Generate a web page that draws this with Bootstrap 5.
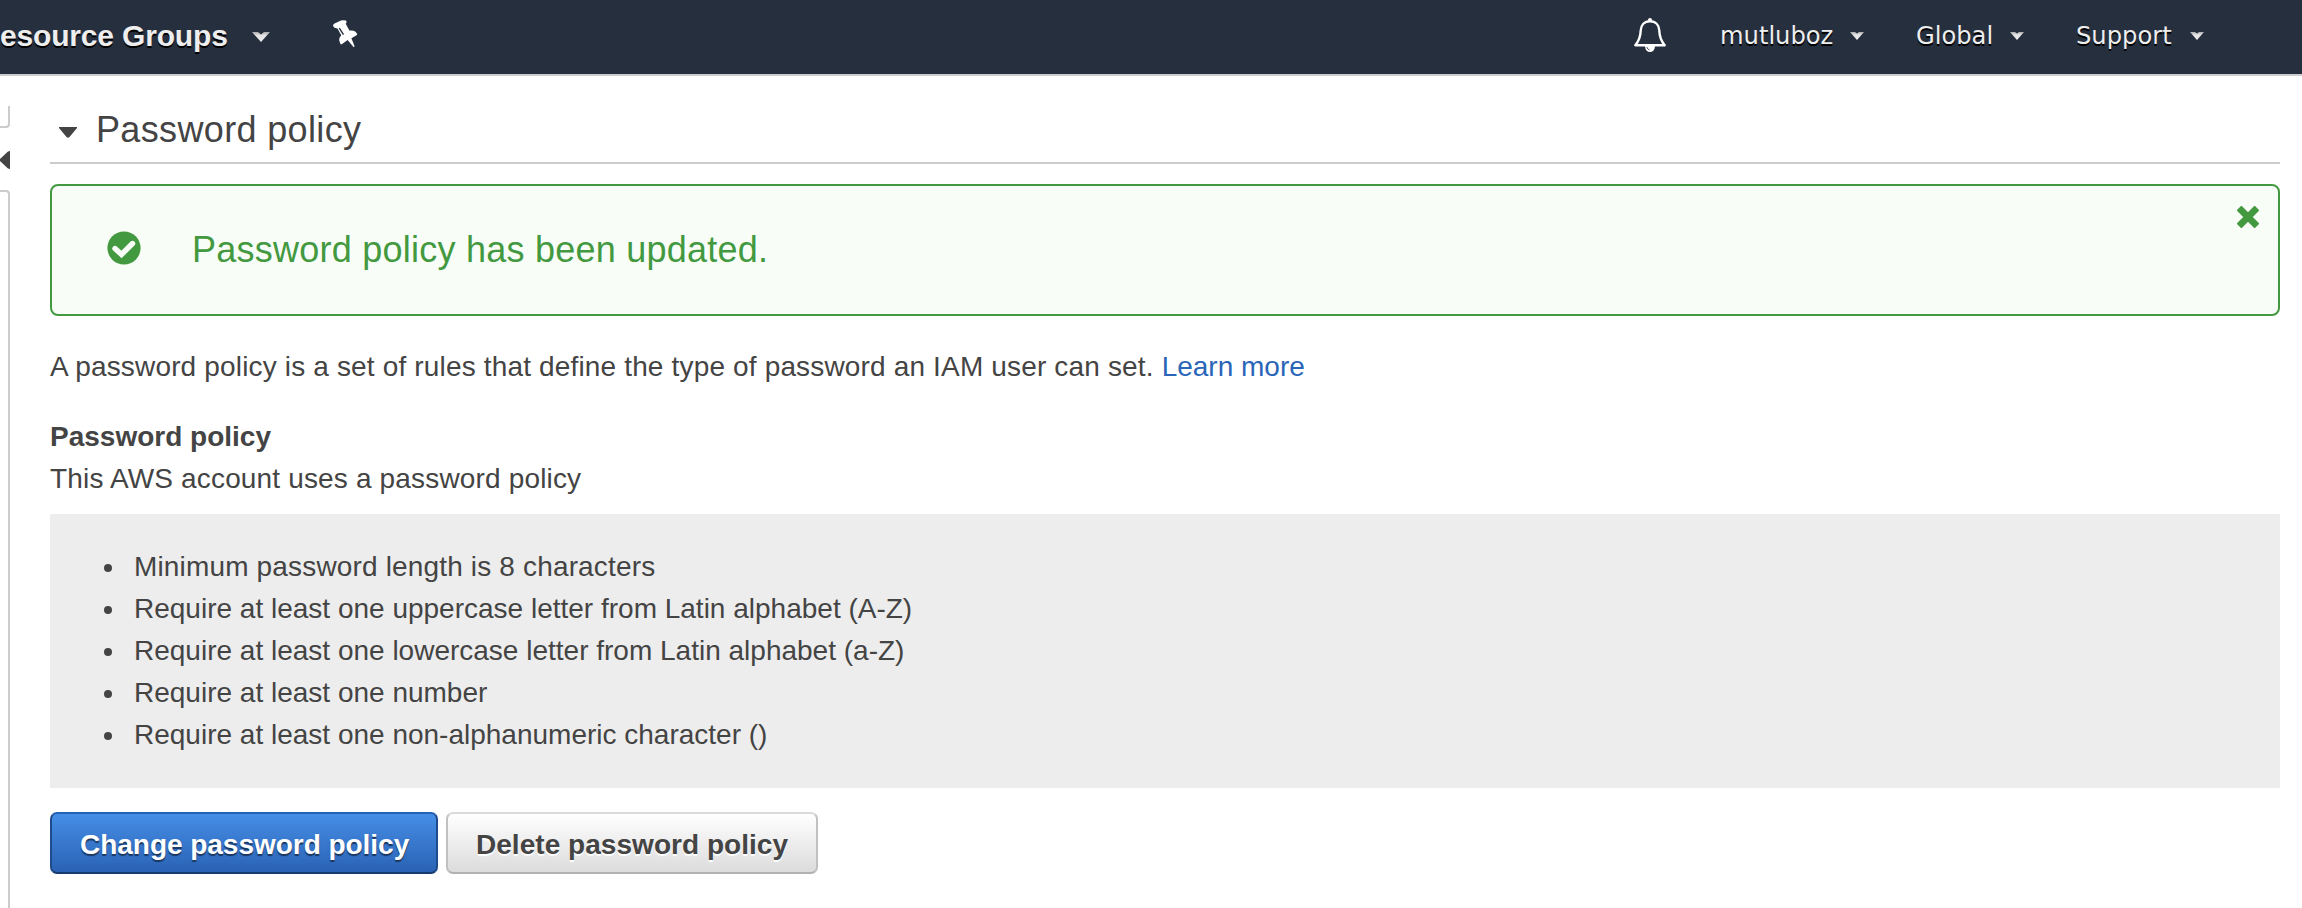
<!DOCTYPE html>
<html lang="en">
<head>
<meta charset="utf-8">
<meta name="viewport" content="width=device-width, initial-scale=1">
<title>Password policy</title>
<link href="https://cdn.jsdelivr.net/npm/bootstrap@5.3.0/dist/css/bootstrap.min.css" rel="stylesheet">
<style>
body{font-family:"Liberation Sans",Arial,sans-serif;font-size:28px;line-height:42px;color:#444;background:#fff;height:908px;overflow:hidden}
svg{display:block;flex-shrink:0}
.topbar{height:76px;background:#262f3e;border-bottom:2px solid #ccc;color:#eee;padding-right:98px}
.groups{font-weight:700;font-size:30px;line-height:71px;letter-spacing:-.17px;width:252px;text-shadow:0 2px 0 #000;white-space:nowrap}
.caret-lg{margin:32px 0 0}
.pin{margin:20px 0 0 63px}
.bell{margin:18px 54px 0 0}
.menu-item{font-family:"DejaVu Sans",Verdana,sans-serif;font-size:24.2px;line-height:73px;text-shadow:0 2px 0 #000}
.menu-item svg{margin-top:32px}
.item-user{width:144px}
.item-region{width:108px}
.item-help{width:128px}
.gap-menu{margin-left:52px}
.side{width:10px;height:832px;padding-top:30px}
.side-top{height:22px;border:solid #ccc;border-width:0 2px 2px 0;border-bottom-right-radius:4px}
.side-rest{border:solid #ccc;border-width:2px 2px 0 0;border-top-right-radius:4px}
.side svg{margin:22px 0 20px}
.main{padding:0 22px 0 40px}
.section-head{height:88px;border-bottom:2px solid #ccc;font-size:36px;line-height:54px;padding:27px 0 0 9px;letter-spacing:.35px}
.section-head svg{margin:24px 19px 0 0}
.notice{margin-top:20px;height:132px;border:2px solid #43993f;border-radius:8px;background:#f8fdf8;color:#43993f;font-size:36px;line-height:54px;letter-spacing:.24px;padding:0 19px 0 55px}
.notice .tick{margin:45px 51px 0 0}
.notice .msg{margin-top:37px}
.notice .cross{margin-top:20px}
.intro{margin:30px 0 28px}
.wide{letter-spacing:.16px}
.rules{background:#ededed;height:274px;padding:32px 0 0 84px;margin:14px 0 24px;list-style:none}
.rules li::before{content:"";display:inline-block;width:8px;height:8px;border-radius:50%;background:#444;margin:0 22px 0 -30px;vertical-align:4px}
.act{height:62px;border-radius:7px;border:2px solid;font-size:28px;font-weight:700;line-height:61px;padding:0 0 0 28px;text-align:left}
.act-blue{width:388px;letter-spacing:-.03px;color:#fff;background:linear-gradient(#458ee6,#2a62b4);border-color:#2461b5 #1d4b8c #193b6b #1d4b8c;text-shadow:0 2px 1px #1a365f}
.act-grey{width:372px;letter-spacing:.04px;color:#444;background:linear-gradient(#fff,#dcdcdc);border-color:#dadada #c0c0c0 #b2b2b2;text-shadow:0 2px 1px #fff}
a{color:#2a65b8;text-decoration:none}
</style>
</head>
<body>
<svg width="0" height="0" class="position-absolute">
  <linearGradient id="cg" x1="0" y1="0" x2="0" y2="1"><stop offset="0" stop-color="#aaa"/><stop offset=".35" stop-color="#e4e4e4"/><stop offset="1" stop-color="#eee"/></linearGradient>
</svg>
<nav class="topbar d-flex align-items-start">
  <span class="groups">esource Groups</span>
  <svg class="caret-lg" width="18" height="10"><path d="M0 0H6L9 2.6L12 0H18L9 10Z" fill="url(#cg)"/></svg>
  <svg class="pin" width="25" height="28" viewBox="0 0 25 28"><path d="M0 6Q0 4.500 1.500 3.600L8 .5Q10.500 0 13 .6L13.600 1.700Q13.500 3 12.700 3.800L16.400 10.600Q20.500 10.200 22.500 11.800L24.300 14L23.600 15.300L18.400 18.200L21.600 26.200L20.700 27.200L14.600 20.100L8.800 24.200Q7.600 24.500 7.300 23.700L6.200 20.300Q6.200 17.300 8.200 15.200L4.500 8.400Q1 8.500 0 6Z" fill="#fff"/><path d="M6.300 8.200L10.500 14.700" stroke="#262f3e" stroke-width="1.400"/></svg>
  <svg class="bell ms-auto" width="32" height="34" viewBox="0 0 32 34"><path d="M16 3.200C10.500 3.200 6.900 6.900 6.700 12.500C6.500 20 4.500 23.500 1.300 27.200H30.700C27.500 23.500 25.500 20 25.300 12.500C25.100 6.900 21.500 3.200 16 3.200Z" fill="none" stroke="#fff" stroke-width="2.400" stroke-linejoin="round"/><circle cx="16" cy="2" r="2" fill="#fff"/><path d="M11 28H21Q20.500 34 16 34T11 28Z" fill="#fff"/><path d="M12.800 29Q13.500 31.500 15.500 32" fill="none" stroke="#262f3e" stroke-width=".8"/></svg>
  <div class="menu-item item-user d-flex justify-content-between align-items-start">mutluboz<svg width="14" height="8"><path d="M0 0H5L7 1.500L9 0H14L7 8Z" fill="url(#cg)"/></svg></div>
  <div class="menu-item item-region gap-menu d-flex justify-content-between align-items-start">Global<svg width="14" height="8"><path d="M0 0H5L7 1.500L9 0H14L7 8Z" fill="url(#cg)"/></svg></div>
  <div class="menu-item item-help gap-menu d-flex justify-content-between align-items-start">Support<svg width="14" height="8"><path d="M0 0H5L7 1.500L9 0H14L7 8Z" fill="url(#cg)"/></svg></div>
</nav>
<div class="d-flex">
  <aside class="side d-flex flex-column flex-shrink-0">
    <div class="side-top"></div>
    <svg width="10" height="20"><path d="M10 1V19L8 18.500L0 11V9L8 1.500Z" fill="#444"/></svg>
    <div class="side-rest flex-grow-1"></div>
  </aside>
  <main class="main flex-grow-1">
    <h1 class="section-head m-0 fw-normal d-flex align-items-start"><svg width="18" height="11"><path d="M0 0H18V1L10.500 10Q9 11.500 7.500 10L0 1Z" fill="#444"/></svg>Password policy</h1>
    <div class="notice d-flex align-items-start">
      <svg class="tick" width="34" height="34"><circle cx="17" cy="17" r="16.600" fill="#43993f"/><path d="M8 17.500L14.500 23.500L25.500 12.500" fill="none" stroke="#f8fdf8" stroke-width="5.400" stroke-linejoin="miter" stroke-linecap="round"/></svg>
      <span class="msg">Password policy has been updated.</span>
      <svg class="cross ms-auto" width="22" height="22"><path d="M4.400 4.400L17.600 17.600M17.600 4.400L4.400 17.600" stroke="#43993f" stroke-width="6.800" stroke-linecap="square"/></svg>
    </div>
    <p class="intro"><span class="wide">A password policy is a set of rules that define the type of password an IAM user can set. </span><a href="#">Learn more</a></p>
    <div class="fw-bold">Password policy</div>
    <div class="wide">This AWS account uses a password policy</div>
    <ul class="rules">
      <li class="wide">Minimum password length is 8 characters</li>
      <li>Require at least one uppercase letter from Latin alphabet (A-Z)</li>
      <li>Require at least one lowercase letter from Latin alphabet (a-Z)</li>
      <li>Require at least one number</li>
      <li>Require at least one non-alphanumeric character ()</li>
    </ul>
    <div class="d-flex gap-2"><button class="btn act act-blue">Change password policy</button><button class="btn act act-grey">Delete password policy</button></div>
  </main>
</div>
<script src="https://cdn.jsdelivr.net/npm/bootstrap@5.3.0/dist/js/bootstrap.bundle.min.js"></script>
</body>
</html>
